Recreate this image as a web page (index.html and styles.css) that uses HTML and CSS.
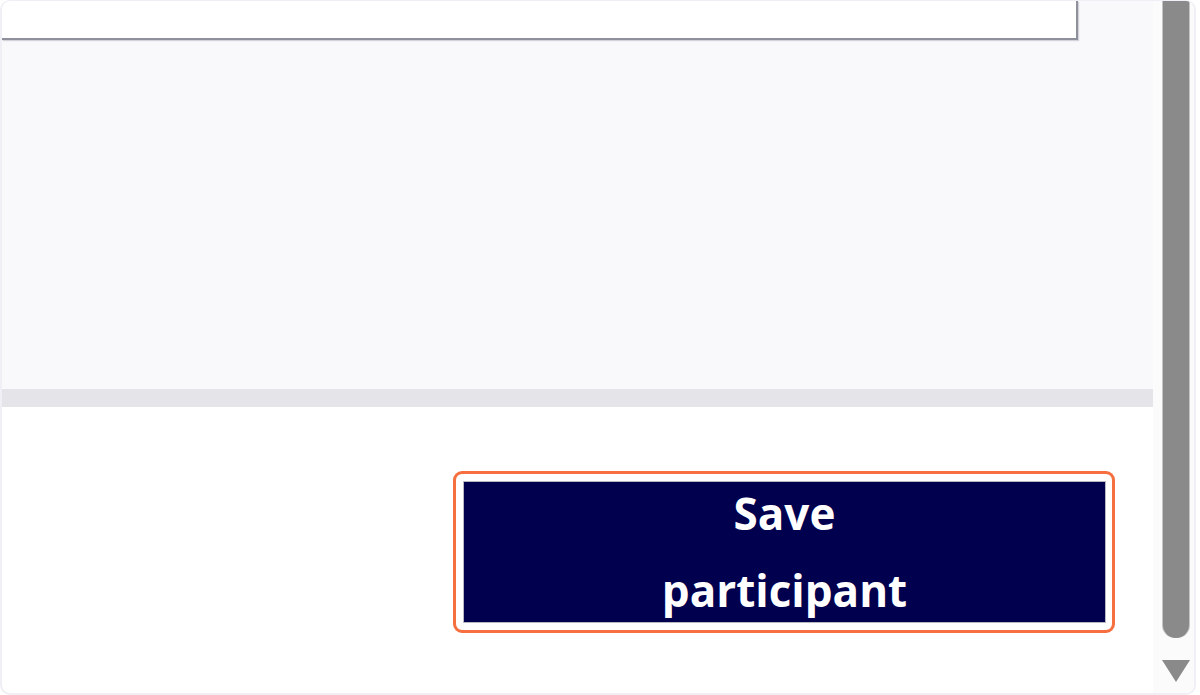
FILE: index.html
```html
<!DOCTYPE html>
<html>
<head>
<meta charset="utf-8">
<link rel="stylesheet" href="styles.css">
</head>
<body>
<div class="frame">
  <div class="main">
    <div class="panel">
      <div class="textarea"></div>
    </div>
    <div class="band"></div>
    <div class="footer">
      <div class="focus-ring">
        <button class="save-btn"><span class="label">Save<br>participant</span></button>
      </div>
    </div>
  </div>
  <div class="scrollbar">
    <div class="thumb"></div>
    <div class="arrow"></div>
  </div>
</div>
</body>
</html>
```

FILE: styles.css
```css
html, body {
  margin: 0;
  padding: 0;
  background: #ffffff;
}
.frame {
  box-sizing: border-box;
  width: 1196px;
  height: 695px;
  border: 2px solid #efeff5;
  border-top-width: 1px;
  border-left-width: 2px;
  border-radius: 10px;
  display: flex;
  overflow: hidden;
  background: #ffffff;
}
.main {
  width: 1151px;
  display: flex;
  flex-direction: column;
}
.panel {
  height: 388px;
  background: #f9f9fb;
}
.textarea {
  box-sizing: border-box;
  width: 1076px;
  height: 39px;
  background: #ffffff;
  border-right: 2px solid #8e909c;
  border-bottom: 2px solid #8e909c;
  box-shadow: 1px 1px 1px rgba(140, 144, 160, 0.35);
}
.band {
  height: 18px;
  background: #e4e4e9;
}
.footer {
  flex: 1;
  display: flex;
  justify-content: flex-end;
  align-items: flex-start;
  padding-top: 64px;
  padding-right: 38px;
}
.focus-ring {
  box-sizing: border-box;
  width: 662px;
  height: 162px;
  border: 3px solid #f56f40;
  border-radius: 9px;
  padding: 7px 6px 7px 7px;
  background: #ffffff;
}
.save-btn {
  display: flex;
  align-items: center;
  justify-content: center;
  box-sizing: border-box;
  width: 100%;
  height: 100%;
  margin: 0;
  padding: 0;
  background: #00004f;
  border: 1px solid #b8b8c4;
  color: #ffffff;
  font-family: "Open Sans", "Liberation Sans", sans-serif;
  font-weight: 700;
  font-size: 44px;
  line-height: 77px;
  text-align: center;
  overflow: visible;
}
.label {
  display: block;
  flex: none;
}
.scrollbar {
  flex: 1;
  background: #fbfbfc;
  display: flex;
  flex-direction: column;
  align-items: center;
  padding-left: 5px;
}
.thumb {
  width: 26px;
  height: 637px;
  background: #8a8a8a;
  border-radius: 0 0 13px 13px;
  box-shadow: 1px 0 0 #c4c4c4, -1px 0 0 #c4c4c4;
}
.arrow {
  margin-top: 22px;
  width: 0;
  height: 0;
  border-left: 14px solid transparent;
  border-right: 14px solid transparent;
  border-top: 22px solid #8a8a8a;
}
```
